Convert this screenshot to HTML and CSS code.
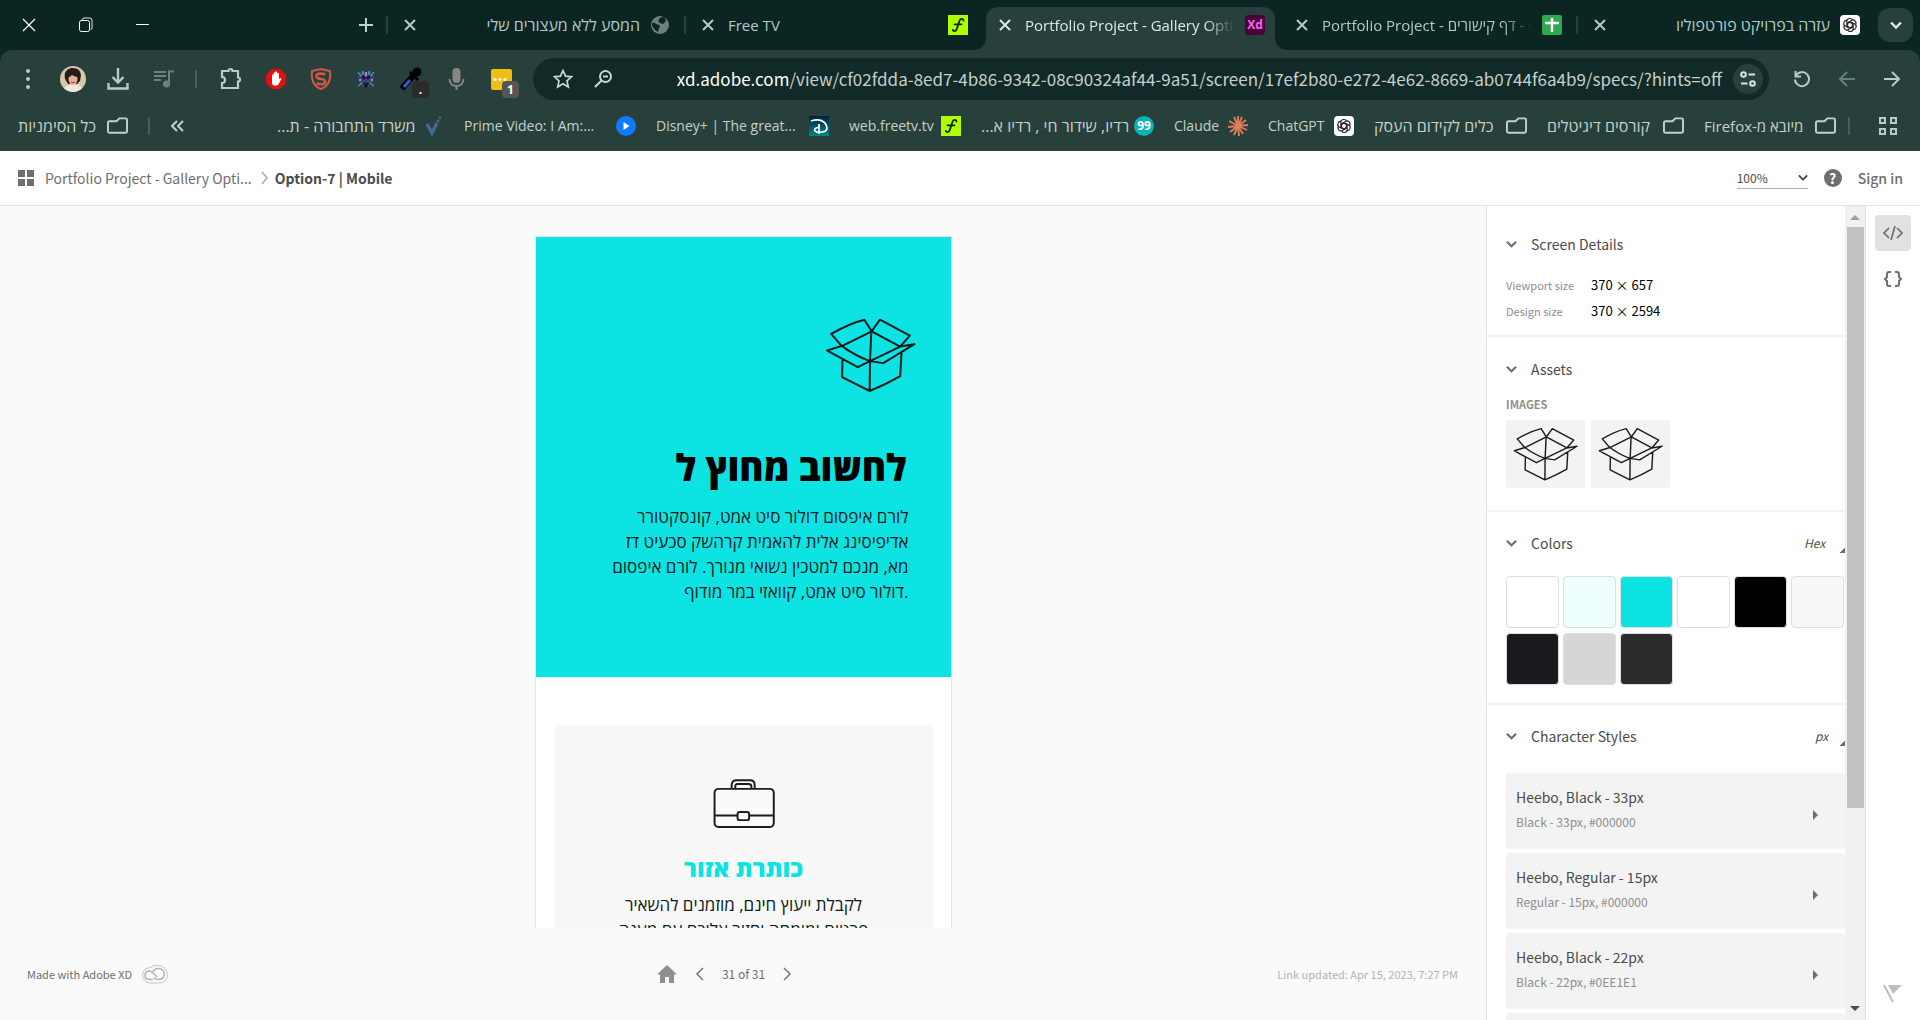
FILE: index.html
```html
<!DOCTYPE html>
<html lang="en">
<head>
<meta charset="utf-8">
<title>Portfolio Project - Gallery Options</title>
<link rel="stylesheet" href="styles.css">
</head>
<body>
<svg class="sprite" aria-hidden="true">
  <symbol id="close" viewBox="0 0 20 20"><path d="M5 5l10 10M15 5L5 15" fill="none" stroke="currentColor" stroke-width="2"/></symbol>
  <symbol id="folder" viewBox="0 0 22 18"><path d="M2.500 16h17a1.500 1.500 0 0 0 1.500-1.500v-12A1.500 1.500 0 0 0 19.500 1H13l-3 3H2.500A1.500 1.500 0 0 0 1 5.500v9A1.500 1.500 0 0 0 2.500 16z" fill="none" stroke="currentColor" stroke-width="2"/></symbol>
  <symbol id="freetv" viewBox="0 0 20 20"><path d="M0 0h20v20H0z" fill="#aeff00"/><path d="M15.500 5.500c0-2-3-2.300-4 .3L8.800 14c-.8 2.800-3.800 2.600-3.900.9M6.500 9.300h7" fill="none" stroke="#10231b" stroke-width="1.800" stroke-linecap="round"/></symbol>
  <symbol id="gpt" viewBox="0 0 20 20"><rect width="20" height="20" rx="4" fill="#fff"/><g fill="none" stroke="#222" stroke-width="1.100"><path id="petal" d="M10 7.300l3.200 1.800v4.600c0 3.200-4.800 3.900-5.700 1"/><use href="#petal" transform="rotate(60 10 10)"/><use href="#petal" transform="rotate(120 10 10)"/><use href="#petal" transform="rotate(180 10 10)"/><use href="#petal" transform="rotate(240 10 10)"/><use href="#petal" transform="rotate(300 10 10)"/></g></symbol>
  <symbol id="box" viewBox="912 292 273 223"><path d="M930 340Q985 308 1030 297L1052 332L962 377ZM1052 332L1077 297L1167 345L1138 378ZM918 390L962 376Q1000 405 1047 422L1010 440ZM1138 378L1181 371L1087 428L1047 422ZM964 418L963 470L1046 512Q1095 492 1138 467L1142 395M1051 332L1047 422L1046 512" fill="none" stroke="currentColor" stroke-width="6" stroke-linejoin="round"/></symbol>
  <symbol id="chev" viewBox="0 0 12 8"><path d="M1 1.500l5 5 5-5" fill="none" stroke="currentColor" stroke-width="2.400"/></symbol>
</svg>

<header class="chrome">
  <div class="tabstrip">
    <div class="winctl">
      <button aria-label="Close window"><svg width="16" height="16"><path d="M2 2l12 12M14 2L2 14" fill="none" stroke="#fff" stroke-width="1.200"/></svg></button>
      <button aria-label="Restore window"><svg width="16" height="16"><path d="M4 3.500V3q.5-2 2-2h6q2 0 2 2v8q0 1.500-1.500 1.700" fill="none" stroke="#dfe8e6"/><rect x="1.500" y="3.500" width="10" height="11" rx="2" fill="none" stroke="#fff"/></svg></button>
      <button aria-label="Minimize window"><svg width="16" height="16"><path d="M1 7.500h13" stroke="#fff"/></svg></button>
    </div>
    <button class="newtab" aria-label="New tab"><svg width="14" height="14"><path d="M7 0v14M0 7h14" stroke="#b9d3cd" stroke-width="2"/></svg></button>
    <nav class="tabs">
      <div class="tab sep"><button aria-label="Close tab"><svg class="i20"><use href="#close"/></svg></button><span class="he">המסע ללא מעצורים שלי</span><svg class="i20" viewBox="0 0 20 20"><circle cx="10" cy="10" r="9" fill="#70807c"/><path d="M2 8q3-1 4 1l3 1q2 1 0 3l-1 4-3-2-3-4zM10 3q3-2 5 0l1 3-3 3-3-1-2-2z" fill="#0b2522"/></svg></div>
      <div class="tab sep"><button aria-label="Close tab"><svg class="i20"><use href="#close"/></svg></button><span>Free TV</span><svg class="i20"><use href="#freetv"/></svg></div>
      <div class="tab active"><button aria-label="Close tab"><svg class="i20"><use href="#close"/></svg></button><span class="fade">Portfolio Project - Gallery Options</span><b class="xd">Xd</b></div>
      <div class="tab"><button aria-label="Close tab"><svg class="i20"><use href="#close"/></svg></button><span class="fade">Portfolio Project - דף קישורים - Go</span><svg class="i20" viewBox="0 0 20 20"><rect width="20" height="20" rx="2" fill="#2fa84f"/><path d="M3 8h14M10 3v14" stroke="#fff" stroke-width="2.400"/></svg></div>
      <div class="tab sep"><button aria-label="Close tab"><svg class="i20"><use href="#close"/></svg></button><span class="he">עזרה בפרויקט פורטפוליו</span><svg class="i20"><use href="#gpt"/></svg></div>
    </nav>
    <button class="tabsearch" aria-label="Search tabs"><svg width="12" height="8"><use href="#chev"/></svg></button>
  </div>

  <div class="toolbar">
    <div class="tools">
      <button aria-label="Menu"><svg class="i24" viewBox="0 0 24 24"><circle cx="12" cy="4" r="2"/><circle cx="12" cy="12" r="2"/><circle cx="12" cy="20" r="2"/></svg></button>
      <button aria-label="Profile"><svg class="i26" viewBox="0 0 26 26"><circle cx="13" cy="13" r="13" fill="#d5c6ac"/><path d="M5 13Q3 4 11 2q9-1 10 7l-1 6-3 3H8z" fill="#2a1a18"/><ellipse cx="13" cy="13" rx="4.500" ry="6" fill="#e3b394"/><path d="M7 12q3-1 5-3 3 2 6 2l1-5-6-3-6 3z" fill="#2a1a18"/><path d="M4 22q4-4 8-3 7-1 10 3-9 8-18 0z" fill="#efe6df"/><path d="M11 16q2 1.500 4 0" stroke="#a33" fill="none"/></svg></button>
      <button aria-label="Downloads"><svg class="i24" viewBox="0 0 24 24" fill="none" stroke="#b4cdc7" stroke-width="2.400"><path d="M12 1v14M6.500 10l5.500 5.500 5.500-5.500M2.500 16v5.500h19V16"/></svg></button>
      <button aria-label="Media"><svg class="i24" viewBox="0 0 24 24" fill="none" stroke="#6f817c" stroke-width="2"><path d="M3 5h12M3 9h12M3 13h7M18 17V4.500h5"/><circle cx="15.500" cy="17" r="2.500" fill="#6f817c"/></svg></button>
      <i class="bar"></i>
      <button aria-label="Extensions"><svg class="i24" viewBox="0 0 24 24" fill="none" stroke="#b4cdc7" stroke-width="2.200"><path d="M3 4h6.500a2 2 0 0 1 4 0H19v6.500a2 2 0 0 1 0 4V21H3v-5a3 3 0 0 0 0-6z"/></svg></button>
      <button aria-label="Ad blocker"><svg class="i24" viewBox="0 0 24 24"><path d="M8 2h8l6 6v8l-6 6H8l-6-6V8z" fill="#e80d0d"/><path d="M8 13V8q1-1.500 1.600 0V6q1-1.500 1.700 0V5q1-1.500 1.800 0v1.500q1-1.500 1.800 0V12l2-1q.8.300.3 1.200l-3 5.800q-4 2-6.200-1z" fill="#fff"/></svg></button>
      <button aria-label="Stylus"><svg class="i24" viewBox="0 0 24 24" fill="none" stroke="#d25843" stroke-width="2"><path d="M12 2L21 4q1.500 14-9 18Q1.500 18 3 4z"/><path d="M16.500 7.200Q8 5.500 7.500 8.500T12 12t4 3.500-8.500 1" stroke-width="2.600"/></svg></button>
      <button aria-label="Robot"><svg class="i24" viewBox="0 0 24 24"><path d="M7 4l5 2 5-2 3 5-1 6-4 5H9l-4-5-1-6z" fill="#3c4377"/><path d="M4 5l4 5M20 5l-4 5M4 19l4-3M20 19l-4-3M9 4v4M15 4v4" stroke="#55c9d7"/><path d="M8 9l3 3M16 9l-3 3M10 16l2 3 2-3" stroke="#17152b" stroke-width="2.500" fill="none"/><path d="M5 13h2M17 13h2M12 5v4" stroke="#b978e0" stroke-width="2"/></svg></button>
      <button class="badged" aria-label="Color picker"><svg class="i24" viewBox="0 0 24 24"><path d="M15 8L5 19l-2 3" stroke="#000" stroke-width="6"/><path d="M11 13l-6 7" stroke="#4052e0" stroke-width="3"/><path d="M11 5l8 8" stroke="#000" stroke-width="3"/><circle cx="18" cy="5" r="4.500" fill="#000"/></svg><em class="dark">.</em></button>
      <button aria-label="Microphone"><svg class="i24" viewBox="0 0 24 24" fill="none" stroke="#868686" stroke-width="2"><rect x="9.500" y="2" width="6" height="13" rx="3" fill="#868686"/><path d="M5.500 12q.5 7 7 7t7-7M12.500 19v4"/></svg></button>
      <button class="badged" aria-label="Notes"><svg class="i24" viewBox="0 0 24 24"><rect x="2" y="2" width="21" height="21" rx="2" fill="#efc012"/><g fill="#fff"><circle cx="6" cy="12.500" r="1.600"/><circle cx="11" cy="12.500" r="1.600"/><circle cx="16" cy="12.500" r="1.600"/></g></svg><em>1</em></button>
    </div>
    <div class="omnibox">
      <button aria-label="Bookmark"><svg class="i20" viewBox="0 0 20 20"><path d="M10 1.500l2.500 5.700 6 .6-4.500 4.100 1.300 6.100-5.300-3.200L4.700 18 6 11.900 1.500 7.800l6-.6z" fill="none" stroke="#c9d6d3" stroke-width="1.700"/></svg></button>
      <button aria-label="Zoom"><svg class="i20" viewBox="0 0 20 20" fill="none" stroke="#c9d6d3" stroke-width="2"><circle cx="12.500" cy="7.500" r="5.500"/><path d="M8.500 11.500L2 18M10 7.500h5"/></svg></button>
      <div class="url"><b>xd.adobe.com</b>/view/cf02fdda-8ed7-4b86-9342-08c90324af44-9a51/screen/17ef2b80-e272-4e62-8669-ab0744f6a4b9/specs/?hints=off</div>
      <button class="site" aria-label="Site information"><svg class="i20" viewBox="0 0 20 20" fill="none" stroke="#d5e5e1" stroke-width="2"><circle cx="5.500" cy="5.500" r="2.300"/><path d="M10.500 5.500H17M3 14.500h6.500"/><circle cx="14.500" cy="14.500" r="2.300"/></svg></button>
    </div>
    <div class="navs">
      <button aria-label="Reload"><svg class="i20" viewBox="0 0 20 20" fill="none" stroke="#b4cdc7" stroke-width="2"><path d="M4 6.500a7 7 0 1 1-1 4M3.500 2v5.500H9"/></svg></button>
      <button aria-label="Forward"><svg class="i20" viewBox="0 0 20 20" fill="none" stroke="#64807a" stroke-width="2"><path d="M18 10H4M10 3l-7 7 7 7"/></svg></button>
      <button aria-label="Back"><svg class="i20" viewBox="0 0 20 20" fill="none" stroke="#b4cdc7" stroke-width="2"><path d="M2 10h14M10 3l7 7-7 7"/></svg></button>
    </div>
  </div>

  <nav class="bookmarks">
    <a href="#" class="all"><span class="he">כל הסימניות</span><svg class="fold"><use href="#folder"/></svg></a>
    <i class="bar"></i>
    <button class="more" aria-label="More bookmarks"><svg width="14" height="12"><path d="M6 1L1 6l5 5M12 1L7 6l5 5" fill="none" stroke="#c4d0cd" stroke-width="2"/></svg></button>
    <div class="marks">
      <a href="#"><span class="he">משרד התחבורה - ת...</span><svg class="i20" viewBox="0 0 20 20"><path d="M3 8l5 9 5-10" fill="none" stroke="#416a93" stroke-width="3.500"/><circle cx="14" cy="5" r="1.500" fill="#416a93"/><circle cx="16" cy="1.800" r="1.200" fill="#416a93"/></svg></a>
      <a href="#"><span>Prime Video: I Am:...</span><svg class="i20" viewBox="0 0 20 20"><circle cx="10" cy="10" r="10" fill="#0f79ff"/><path d="M7.500 6l6 4-6 4z" fill="#fff"/></svg></a>
      <a href="#"><span>Disney+ | The great...</span><svg class="i20" viewBox="0 0 20 20"><defs><linearGradient id="dg" x2="0" y2="1"><stop stop-color="#03213d"/><stop offset="1" stop-color="#03848a"/></linearGradient></defs><path d="M0 0h20v20H0z" fill="url(#dg)"/><path d="M2 5q9-3 14 2 5 8-3 9-5 1-7-1-2-3 5-4M10 8v10" fill="none" stroke="#fff" stroke-width="1.700"/></svg></a>
      <a href="#"><span>web.freetv.tv</span><svg class="i20"><use href="#freetv"/></svg></a>
      <a href="#"><span class="he">רדיו, שידור חי , רדיו א...</span><b class="n99">99</b></a>
      <a href="#"><span>Claude</span><svg class="i20" viewBox="0 0 20 20"><path d="M10 10L10 0M10 10L14 1M10 10L18 4M10 10L20 9M10 10L19 14M10 10L15 18M10 10L11 20M10 10L6 19M10 10L2 16M10 10L0 11M10 10L1 5M10 10L6 1" stroke="#de7c5b" stroke-width="1.900"/></svg></a>
      <a href="#"><span>ChatGPT</span><svg class="i20"><use href="#gpt"/></svg></a>
      <a href="#"><span class="he">כלים לקידום העסק</span><svg class="fold"><use href="#folder"/></svg></a>
      <a href="#"><span class="he">קורסים דיגיטלים</span><svg class="fold"><use href="#folder"/></svg></a>
      <a href="#"><span class="he mixed">מיובא מ-Firefox</span><svg class="fold"><use href="#folder"/></svg></a>
    </div>
    <i class="bar"></i>
    <button class="apps" aria-label="Apps"><svg width="18" height="18" fill="none" stroke="#b9cbc7" stroke-width="2"><path d="M1 1h5v5H1zM12 1h5v5h-5zM1 12h5v5H1zM12 12h5v5h-5z"/></svg></button>
  </nav>
</header>

<div class="appbar">
  <a href="#" aria-label="All screens"><svg width="18" height="18" fill="#6e6e6e"><path d="M1 1h7v7H1zM10 1h7v7h-7zM1 10h7v7H1zM10 10h7v7h-7z"/></svg></a>
  <a href="#" class="crumb">Portfolio Project - Gallery Opti...</a>
  <svg width="8" height="14"><path d="M1 1l5 6-5 6" fill="none" stroke="#aaa" stroke-width="1.500"/></svg>
  <strong>Option-7 | Mobile</strong>
  <label class="zoom"><select aria-label="Zoom level"><option>100%</option></select><svg width="10" height="7" viewBox="0 0 12 8"><use href="#chev"/></svg></label>
  <button aria-label="Help" class="help">?</button>
  <a href="#" class="signin">Sign in</a>
</div>

<div class="work">
  <main class="canvas">
    <div class="artboard">
      <section class="hero">
        <svg class="boxart"><use href="#box"/></svg>
        <h1>לחשוב מחוץ ל</h1>
        <p>לורם איפסום דולור סיט אמט, קונסקטורר<br>אדיפיסינג אלית להאמית קרהשק סכעיט דז<br>מא, מנכם למטכין נשואי מנורך. לורם איפסום<br>דולור סיט אמט, קוואזי במר מודוף.</p>
      </section>
      <section class="card">
        <svg class="case" viewBox="576 357 187 152" fill="none" stroke="#1c1c1c" stroke-width="6"><rect x="580" y="387" width="180" height="116" rx="12" fill="#fafafa"/><path d="M632 386v-12q2-13 14-13h42q14 0 14 14v11M643 386v-8q1-6 7-6h34q8 0 8 8v6M580 468h70M686 468h74"/><rect x="650" y="457" width="35" height="25" rx="6" fill="#fafafa"/></svg>
        <h2>כותרת אזור</h2>
        <p>לקבלת ייעוץ חינם, מוזמנים להשאיר<br>פרטים ומומחה יחזור אליכם עם מענה</p>
      </section>
    </div>
    <footer class="foot">
      <span class="made">Made with Adobe XD <svg width="26" height="19" viewBox="0 0 26 19" fill="none" stroke="#c4c4c4"><path d="M8 18q-7-1-7.500-8Q1 3 8 2.500 12 0 16 .5q9 1 9.500 9-.5 8-8 8.500z"/><path d="M10 8q3-5 7-4.500 5 .5 5.500 6-1 5-6 5-3 0-5-2M15 12l-4-4q-2-2-4-2-4 .5-4 4.500 0 4 5 4h3" stroke-width="1.600" stroke="#b5b5b5"/></svg></span>
      <div class="pager">
        <button aria-label="Home"><svg width="20" height="18"><path d="M10 0L0 9.500h3V18h5v-6h4v6h5V9.500h3z" fill="#8e8e8e"/></svg></button>
        <button aria-label="Previous"><svg width="9" height="14"><path d="M8 1L2 7l6 6" fill="none" stroke="#777" stroke-width="1.500"/></svg></button>
        <span>31 of 31</span>
        <button aria-label="Next"><svg width="9" height="14"><path d="M1 1l6 6-6 6" fill="none" stroke="#777" stroke-width="1.500"/></svg></button>
      </div>
      <span class="updated">Link updated: Apr 15, 2023, 7:27 PM</span>
    </footer>
  </main>

  <aside class="panel">
    <section class="details">
      <h3><svg class="chev"><use href="#chev"/></svg>Screen Details</h3>
      <dl><dt>Viewport size</dt><dd>370 × 657</dd><dt>Design size</dt><dd>370 × 2594</dd></dl>
    </section>
    <section class="assets">
      <h3><svg class="chev"><use href="#chev"/></svg>Assets</h3>
      <h4>IMAGES</h4>
      <div class="thumbs"><button aria-label="Box image"><svg><use href="#box"/></svg></button><button aria-label="Box image"><svg><use href="#box"/></svg></button></div>
    </section>
    <section class="colors">
      <h3><svg class="chev"><use href="#chev"/></svg>Colors<select class="unit" aria-label="Color format"><option>Hex</option></select><i class="corner"></i></h3>
      <div class="swatches"><i class="white"></i><i class="mint"></i><i class="cyan"></i><i class="white"></i><i class="black"></i><i class="pale"></i><i class="ink"></i><i class="grey"></i><i class="coal"></i></div>
    </section>
    <section class="chars">
      <h3><svg class="chev"><use href="#chev"/></svg>Character Styles<select class="unit px" aria-label="Size unit"><option>px</option></select><i class="corner"></i></h3>
      <ul>
        <li><div>Heebo, Black - 33px<small>Black - 33px, #000000</small></div><i class="tri"></i></li>
        <li><div>Heebo, Regular - 15px<small>Regular - 15px, #000000</small></div><i class="tri"></i></li>
        <li><div>Heebo, Black - 22px<small>Black - 22px, #0EE1E1</small></div><i class="tri"></i></li>
        <li></li>
      </ul>
    </section>
  </aside>
  <div class="scroll"><i class="up"></i><i class="thumb"></i><i class="down"></i></div>
  <nav class="rail">
    <button class="on" aria-label="Specs"><svg width="20" height="14" fill="none" stroke="#6e6e6e" stroke-width="1.700"><path d="M6 2L1 7l5 5M14 2l5 5-5 5M12 0L8 14"/></svg></button>
    <button aria-label="Variables"><svg width="20" height="16" fill="none" stroke="#6e6e6e" stroke-width="2"><path d="M8 1H6Q4 1 4 3v3L2 8l2 2v3q0 2 2 2h2M12 1h2q2 0 2 2v3l2 2-2 2v3q0 2-2 2h-2"/></svg></button>
    <button class="flag" aria-label="Report"><svg width="20" height="20"><path d="M1 1l9 17" stroke="#bdbdbd" stroke-width="2"/><path d="M5 1h14L10 10z" fill="#bdbdbd"/></svg></button>
  </nav>
</div>
</body>
</html>
```
FILE: styles.css
```css
* { box-sizing: border-box; }
body { margin: 0; height: 100vh; display: flex; flex-direction: column; overflow: hidden; font: 14px/20px "Noto Sans CJK JP", "Open Sans", sans-serif; color: #4b4b4b; background: #fafafa; }
button { border: 0; padding: 0; background: none; font: inherit; color: inherit; display: flex; align-items: center; justify-content: center; }
a { color: inherit; text-decoration: none; }
svg { display: block; flex: none; }
.sprite { position: absolute; width: 0; height: 0; }
.i20 { width: 20px; height: 20px; }
.i24 { width: 24px; height: 24px; }
.i26 { width: 26px; height: 26px; }

/* browser frame */
.chrome { background: linear-gradient(#0b2522 65px, #28403b 65px); color: #c4d0cd; font: 15px/20px "Open Sans", sans-serif; flex: none; height: 151px; }
.he { direction: rtl; font-size: 16px; }
.tabstrip { display: flex; height: 50px; background: #0b2522; color: #b0ccc6; align-items: center; }
.winctl { display: flex; width: 171px; }
.winctl button { width: 57px; height: 50px; }
.newtab { margin-left: auto; margin-right: 13px; }
.tabs { display: flex; width: 1488px; align-self: stretch; flex: none; }
.tab { flex: 1; min-width: 0; display: flex; align-items: center; padding: 0 14px; gap: 10px; white-space: nowrap; position: relative; }
.tab.sep::before { content: ""; position: absolute; left: 0; top: 16px; width: 2px; height: 18px; background: #28403b; }
.tab > span { flex: 1; min-width: 0; overflow: hidden; font-size: 15px; }
.tab > span.he { font-size: 16px; }
.tab > span.fade { -webkit-mask-image: linear-gradient(90deg, #000 86%, transparent); mask-image: linear-gradient(90deg, #000 86%, transparent); }
.tab.active { background: #28403b; margin: 7px 3px 0 4px; border-radius: 12px 12px 0 0; padding: 0 10px 7px 9px; color: #dce9e6; }
.tab.active::before, .tab.active::after { content: ""; position: absolute; bottom: 0; width: 12px; height: 12px; }
.tab.active::before { left: -12px; background: radial-gradient(circle at 0 0, transparent 12px, #28403b 12px); }
.tab.active::after { right: -12px; background: radial-gradient(circle at 100% 0, transparent 12px, #28403b 12px); }
.xd { width: 20px; height: 20px; border-radius: 4px; background: #470137; color: #ff61f6; font-size: 12px; text-align: center; }
.tabsearch { width: 35px; height: 34px; border-radius: 12px; background: #28403b; color: #dce9e6; margin: 0 7px 0 4px; flex: none; }

.toolbar { display: flex; height: 50px; padding-top: 8px; background: #28403b; border-radius: 12px 12px 0 0; align-items: center; }
.tools { display: flex; align-items: center; padding-left: 5px; fill: #b4cdc7; width: 533px; flex: none; }
.tools button { width: 45px; height: 42px; position: relative; }
.bar { width: 2px; height: 18px; background: #475f59; border-radius: 1px; flex: none; }
.tools .bar { margin: 0 11px 0 10px; }
.tools em { position: absolute; right: 4px; bottom: 2px; width: 17px; height: 17px; border-radius: 4px; background: #555; color: #fff; font: bold 12px/17px "Open Sans", sans-serif; }
.tools em.dark { background: #2b2b2b; }
.omnibox { flex: 1; min-width: 0; height: 42px; border-radius: 21px; background: #112a27; display: flex; align-items: center; padding: 0 6px 0 20px; gap: 20px; }
.url { flex: 1; min-width: 0; text-align: right; white-space: nowrap; font: 17px/24px "Noto Sans CJK JP", "Open Sans", sans-serif; color: #c4d0cd; }
.url b { font-weight: 400; color: #fff; }
.site { width: 30px; height: 30px; border-radius: 50%; background: #28403b; margin-left: -9px; }
.navs { display: flex; padding: 0 6px 0 10px; }
.navs button { width: 45px; }

.bookmarks { display: flex; height: 51px; align-items: center; padding-left: 18px; white-space: nowrap; }
.bookmarks a { display: flex; align-items: center; justify-content: space-between; min-width: 0; }
.bookmarks span { font-size: 14px; }
.bookmarks span.he { font-size: 16px; }
.bookmarks span.mixed { font-size: 15px; }
.fold { width: 21px; height: 18px; color: #c4d0cd; }
.all { width: 110px; }
.all + .bar { margin: 0 21px 0 20px; }
.more { margin-right: auto; }
.marks { display: grid; grid-template-columns: 167px 172px 173px 112px 173px 74px 86px 153px 137px 132px; gap: 20px; margin-right: 12px; }
.n99 { width: 20px; height: 20px; border-radius: 50%; background: #0ab3b5; color: #fff; font-size: 12px; text-align: center; }
.apps { margin: 0 23px 0 29px; }

/* app header */
.appbar { display: flex; align-items: center; height: 55px; flex: none; border-bottom: 1px solid #e4e4e4; background: #fff; padding: 0 17px; }
.crumb { margin: 0 9px 0 10px; color: #6e6e6e; }
.appbar strong { margin-left: 6px; font-weight: 700; }
.zoom { margin-left: auto; width: 71px; display: flex; align-items: center; justify-content: space-between; border-bottom: 1px solid #b3b3b3; }
.zoom select { appearance: none; border: 0; background: none; padding: 0; font: 12px/20px "Noto Sans CJK JP", "Open Sans", sans-serif; color: #4b4b4b; }
.help { width: 18px; height: 18px; border-radius: 50%; background: #6e6e6e; color: #fff; font-weight: 700; margin: 0 16px; }
.signin { font-weight: 500; color: #6e6e6e; }

.work { flex: 1; min-height: 0; display: flex; }
.canvas { flex: 1; min-width: 0; display: flex; flex-direction: column; align-items: center; padding-top: 30px; }
.artboard { flex: 1; min-height: 0; overflow: hidden; width: 417px; background: #fff; border: 1px solid #e4e4e4; border-bottom: 0; color: #0c1c1c; font: 17px/25px "Open Sans", sans-serif; }
.artboard p { margin: 0; }
.hero { background: #0ee3e3; height: 440px; padding: 81px 42px 0 0; text-align: right; }
.boxart { width: 91px; height: 74px; margin: 0 -7px 0 auto; color: #0c1c1c; }
.hero h1 { margin: 45px 2px 7px 0; font-size: 37px; line-height: 60px; font-weight: 900; color: #000; }
.card { margin: 48px 17px 0 18px; height: 300px; background: #f8f8f8; padding-top: 54px; text-align: center; }
.case { width: 62px; height: 50px; margin: 0 auto 22px; }
.card h2 { margin: 0 0 7px; font-size: 24px; line-height: 34px; font-weight: 900; color: #0ee3e3; }
.foot { height: 92px; flex: none; align-self: stretch; display: grid; grid-template-columns: 1fr auto 1fr; align-items: center; padding: 0 28px 0 27px; font-size: 11px; color: #6e6e6e; }
.made { display: flex; align-items: center; gap: 10px; }
.pager { display: flex; align-items: center; gap: 18px; margin-right: 36px; font-size: 12px; }
.updated { text-align: right; color: #b3b3b3; }

/* inspector */
.panel { width: 359px; flex: none; overflow: hidden; background: #fff; border-left: 1px solid #e4e4e4; }
.panel section { border-bottom: 2px solid #f3f3f3; padding: 28px 0 0 19px; }
.panel h3 { display: flex; align-items: center; margin: 0; font-size: 14px; font-weight: 400; line-height: 20px; height: 20px; }
.chev { width: 11px; height: 8px; color: #6e6e6e; margin-right: 14px; }
.details { height: 131px; }
.details dl { display: grid; grid-template-columns: 85px 1fr; margin: 18px 0 0; line-height: 26px; }
.details dt { font-size: 11px; color: #8e8e8e; }
.details dd { margin: 0; font-size: 13px; color: #000; }
.panel .assets { height: 175px; padding-top: 22px; }
.panel h4 { margin: 15px 0 6px; font-size: 11px; line-height: 20px; color: #8e8e8e; }
.thumbs { display: flex; gap: 6px; }
.thumbs button { width: 79px; height: 68px; border-radius: 2px; background: #f3f3f3; color: #1c1c1c; }
.thumbs svg { width: 65px; height: 54px; }
.panel .colors { height: 193px; padding-top: 21px; }
.unit { appearance: none; border: 0; background: none; padding: 0; margin: 0 14px 0 auto; font: italic 12px/20px "Noto Sans CJK JP", "Open Sans", sans-serif; color: #4b4b4b; }
.unit.px { margin-right: 11px; }
.corner { width: 5px; height: 5px; background: linear-gradient(135deg, transparent 50%, #6e6e6e 50%); align-self: flex-end; }
.swatches { display: flex; flex-wrap: wrap; gap: 5px 4px; margin-top: 23px; margin-right: -20px; }
.swatches i { width: 53px; height: 52px; border: 1px solid #dedede; border-radius: 4px; }
.white { background: #fff; } .mint { background: #efffff; } .cyan { background: #0ee3e3; } .black { background: #000; } .pale { background: #f8f8f8; } .ink { background: #191a1d; } .grey { background: #d6d6d6; } .coal { background: #2c2c2c; }
.panel .chars { padding-top: 21px; border: 0; }
.chars ul { list-style: none; margin: 27px 0 0; padding: 0; display: flex; flex-direction: column; gap: 4px; }
.chars li { height: 76px; border-radius: 3px; background: #f3f3f3; padding: 14px 27px 0 10px; display: flex; justify-content: space-between; }
.chars small { display: block; font-size: 12px; line-height: 20px; margin-top: 5px; color: #8e8e8e; }
.tri { border: solid transparent; border-width: 5px 0 5px 5px; border-left-color: #6e6e6e; height: 0; margin-top: 23px; }
.scroll { width: 21px; flex: none; background: #f1f1f1; border-right: 1px solid #e4e4e4; display: flex; flex-direction: column; align-items: center; padding: 9px 0; }
.up, .down { border: 5px solid transparent; border-top: 0; border-bottom-color: #a0a0a0; }
.down { border: 5px solid transparent; border-bottom: 0; border-top-color: #4b4b4b; margin-top: auto; }
.thumb { width: 17px; height: 73%; background: #c1c1c1; margin-top: 7px; }
.rail { width: 54px; flex: none; background: #fff; display: flex; flex-direction: column; align-items: center; padding: 9px 0 16px; gap: 10px; }
.rail button { width: 36px; height: 36px; border-radius: 4px; }
.rail .on { background: #e1e1e1; }
.rail .flag { margin-top: auto; height: 20px; }
```
